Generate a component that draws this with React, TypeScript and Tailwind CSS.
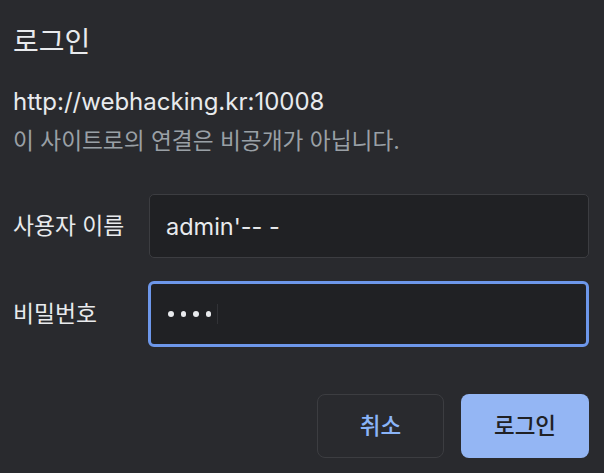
export default function App() {
  return (
    <div
      className="flex h-[473px] w-[604px] flex-col bg-[#292a2e] pl-[13px] pr-[15px] text-[#e8eaed]"
      style={{ fontFamily: '"Inter", "Noto Sans CJK KR", sans-serif' }}
    >
      <h1 className="mt-[24px] h-[36px] text-[28px] leading-[36px] font-normal">로그인</h1>

      <p className="mt-[27px] h-[30px] text-[24px] leading-[30px]">http://webhacking.kr:10008</p>
      <p className="mt-[10px] h-[28px] text-[22.7px] leading-[28px] text-[#9aa0a6]">이 사이트로의 연결은 비공개가 아닙니다.</p>

      <div className="mt-[39px] flex flex-col gap-[23px]">
        <label className="flex items-center">
          <span className="w-[136px] shrink-0 text-[22.8px] leading-[30px]">사용자 이름</span>
          <input
            readOnly
            defaultValue="admin'-- -"
            className="h-[64px] min-w-0 flex-1 rounded-[5px] border border-[#3c3d41] bg-[#202124] px-[16px] text-[23.5px] text-[#e8eaed] outline-none"
          />
        </label>
        <label className="flex items-center">
          <span className="w-[135px] shrink-0 text-[22.8px] leading-[30px]">비밀번호</span>
          {/* focused password field */}
          <div className="flex h-[66px] flex-1 items-center gap-[7px] rounded-[6px] border-[3px] border-[#6d97ea] bg-[#202124] px-[17px]">
            {[0, 1, 2, 3].map((i) => (
              <span key={i} className="h-[5.5px] w-[5.5px] rounded-full bg-[#e8eaed]" />
            ))}
            <span className="ml-[-1px] h-[20px] w-px bg-[#313236]" />
          </div>
        </label>
      </div>

      <div className="mt-[47px] flex justify-end gap-[17px]">
        <button className="h-[64px] w-[127px] rounded-[8px] border border-[#3c3d41] text-[22.5px] font-medium text-[#8ab4f8]">
          취소
        </button>
        <button className="h-[64px] w-[128px] rounded-[8px] bg-[#94b6f4] text-[22.5px] font-medium text-[#202124]">
          로그인
        </button>
      </div>
    </div>
  );
}
